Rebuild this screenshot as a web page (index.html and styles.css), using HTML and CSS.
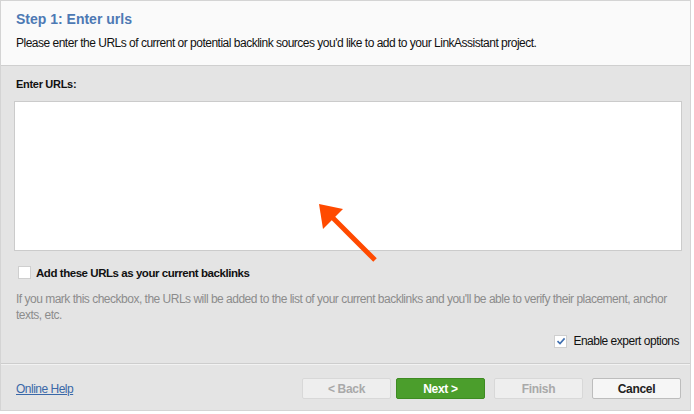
FILE: index.html
```html
<!DOCTYPE html>
<html lang="en">
    <head>
        <meta charset="UTF-8" />
        <title>Step 1: Enter urls</title>
        <link rel="stylesheet" href="styles.css">
    </head>
    <body>
        <div class="dialog">
            <div class="header">
                <h1 class="title">Step 1: Enter urls</h1>
                <p class="subtitle">Please enter the URLs of current or potential backlink sources you'd like to add to your LinkAssistant project.</p>
            </div>

            <div class="content">
                <label class="field-label" for="urls">Enter URLs:</label>
                <textarea class="urls" id="urls"></textarea>

                <label class="check-row">
                    <span class="checkbox"></span>
                    <span class="check-label">Add these URLs as your current backlinks</span>
                </label>
                <p class="hint">If you mark this checkbox, the URLs will be added to the list of your current backlinks and you'll be able to verify their placement, anchor texts, etc.</p>

                <label class="expert-row">
                    <span class="checkbox checked">
                        <svg viewBox="0 0 10 10" width="10" height="10"><path d="M1.5 5.2 L4 7.6 L8.6 2.4" fill="none" stroke="#3f6fb0" stroke-width="1.6"/></svg>
                    </span>
                    <span class="expert-label">Enable expert options</span>
                </label>
            </div>

            <div class="footer">
                <a class="help" href="#">Online Help</a>
                <div class="buttons">
                    <button class="btn disabled">&lt; Back</button>
                    <button class="btn primary">Next &gt;</button>
                    <button class="btn disabled spaced">Finish</button>
                    <button class="btn spaced">Cancel</button>
                </div>
            </div>

            <!-- callout arrow pointing at the text box -->
            <svg class="arrow" width="694" height="414" viewBox="0 0 694 414">
                <line x1="375" y1="260" x2="331" y2="216" stroke="#ff4a00" stroke-width="5"/>
                <polygon points="319,204 343,209 323,229" fill="#ff4a00"/>
            </svg>
        </div>
    </body>
</html>
```

FILE: styles.css
```css
html,
body {
    margin: 0;
    background-color: #fff;
}

body {
    font-family: "Liberation Sans", Arial, sans-serif;
    font-size: 12px;
    letter-spacing: -0.5px;
    color: #111;
}

.dialog {
    position: relative;
    width: 691px;
    height: 411px;
    box-sizing: border-box;
    border: 1px solid #d4d4d4;
    background-color: #e4e4e4;
    display: flex;
    flex-direction: column;
}

/* Header */
.header {
    height: 65px;
    box-sizing: border-box;
    padding: 9px 15px 0;
    background-color: #fafafa;
    border-bottom: 1px solid #cfcfcf;
}

.title {
    margin: 0;
    font-size: 14px;
    font-weight: bold;
    letter-spacing: 0;
    color: #4d79b4;
    line-height: 18px;
}

.subtitle {
    margin: 7px 0 0;
    line-height: 16px;
}

/* Content */
.content {
    flex: 1;
    padding: 11px 8px 0 13px;
    display: flex;
    flex-direction: column;
    border-bottom: 1px solid #cdcdcd;
    box-shadow: 0 1px 0 #f2f2f2;
}

.field-label {
    font-size: 11px;
    font-weight: bold;
    letter-spacing: -0.3px;
    line-height: 14px;
    margin-left: 2px;
}

.urls {
    display: block;
    margin: 10px 0 0;
    height: 150px;
    box-sizing: border-box;
    border: 1px solid #cbcbcb;
    background-color: #fff;
    resize: none;
    outline: none;
}

.check-row {
    display: flex;
    align-items: center;
    margin: 15px 0 0 4px;
}

.checkbox {
    width: 11px;
    height: 11px;
    border: 1px solid #cfcfcf;
    background-color: #fff;
    display: flex;
    align-items: center;
    justify-content: center;
}

.check-label {
    margin-left: 5px;
    font-size: 11.5px;
    font-weight: bold;
    letter-spacing: -0.45px;
}

.hint {
    margin: 12px 0 0 2px;
    line-height: 16px;
    color: #8c8c8c;
}

.expert-row {
    display: flex;
    align-items: center;
    align-self: flex-end;
    margin: 11px 3px 0 0;
}

.expert-label {
    margin-left: 6px;
}

/* Footer */
.footer {
    height: 46px;
    padding: 0 9px 0 15px;
    display: flex;
    align-items: center;
    justify-content: space-between;
}

.help {
    color: #3a68a8;
    text-decoration: underline;
    margin-top: 3px;
}

.buttons {
    display: flex;
    gap: 5px;
    margin-top: 3px;
}

.btn {
    width: 89px;
    height: 21px;
    padding: 0;
    font-family: inherit;
    font-size: 12px;
    font-weight: bold;
    letter-spacing: -0.3px;
    color: #222;
    background-color: #f6f6f6;
    border: 1px solid #bdbdbd;
    border-radius: 2px;
}

.btn.spaced {
    margin-left: 4px;
}

.btn.primary {
    color: #fff;
    background-color: #4b9e2c;
    border-color: #3e8b22;
}

.btn.disabled {
    color: #a9a9a9;
    background-color: #eeeeee;
    border-color: #d8d8d8;
}

.arrow {
    position: absolute;
    left: -1px;
    top: -1px;
    pointer-events: none;
}
```
